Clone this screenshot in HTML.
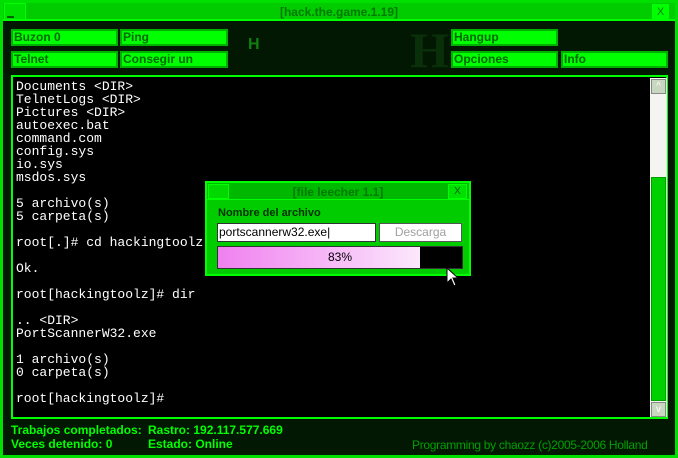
<!DOCTYPE html>
<html><head><style>
*{margin:0;padding:0;box-sizing:border-box}
body{width:678px;height:458px;background:#000;position:relative;overflow:hidden;font-family:"Liberation Sans",sans-serif}
.abs{position:absolute}
.outer{left:0;top:0;width:678px;height:458px;border:3px solid #00e000;background:#021802}
.tb{left:3px;top:3px;width:672px;height:18px;background:#00cc00;border-bottom:2px solid #00ff00}
.btn{background:#00ff00;border:2px solid #00b000;color:#006800;font-weight:bold;font-size:12px;line-height:12px;padding-left:1px}
.term{left:11px;top:75px;width:657px;height:344px;border:2px solid #00ff00;background:#000}
pre{position:absolute;left:3px;top:3px;color:#fff;font-family:"Liberation Mono",monospace;font-size:13px;line-height:13px}
.st{color:#00ff00;font-weight:bold;font-size:12px}
</style></head><body>
<div class="abs outer"></div>
<div class="abs" style="left:248px;top:36px;color:#108010;font:bold 16px 'Liberation Sans'">H</div>
<div class="abs" style="left:410px;top:30px;width:40px;height:40px;color:#0a300a;font:bold 50px 'Liberation Serif';line-height:40px">H</div>
<div class="abs tb"></div>
<div class="abs" style="left:4px;top:3px;width:22px;height:17px;background:#00e000;border:1px solid #00ff00"></div>
<div class="abs" style="left:7px;top:16px;width:7px;height:2px;background:#006000"></div>
<div class="abs" style="left:0;top:5px;width:678px;text-align:center;color:#007800;font-size:12px;font-weight:bold">[hack.the.game.1.19]</div>
<div class="abs" style="left:652px;top:4px;width:17px;height:16px;background:#00ff00;color:#008000;font-size:11px;text-align:center;line-height:16px">X</div>
<div class="abs btn" style="left:11px;top:29px;width:107px;height:17px">Buzon 0</div>
<div class="abs btn" style="left:120px;top:29px;width:108px;height:17px">Ping</div>
<div class="abs btn" style="left:11px;top:51px;width:107px;height:17px">Telnet</div>
<div class="abs btn" style="left:120px;top:51px;width:108px;height:17px">Consegir un</div>
<div class="abs btn" style="left:451px;top:29px;width:107px;height:17px">Hangup</div>
<div class="abs btn" style="left:451px;top:51px;width:107px;height:17px">Opciones</div>
<div class="abs btn" style="left:561px;top:51px;width:107px;height:17px">Info</div>
<div class="abs term"><pre>Documents &lt;DIR&gt;
TelnetLogs &lt;DIR&gt;
Pictures &lt;DIR&gt;
autoexec.bat
command.com
config.sys
io.sys
msdos.sys

5 archivo(s)
5 carpeta(s)

root[.]# cd hackingtoolz

Ok.

root[hackingtoolz]# dir

.. &lt;DIR&gt;
PortScannerW32.exe

1 archivo(s)
0 carpeta(s)

root[hackingtoolz]#</pre>
<div class="abs" style="left:637px;top:1px;width:17px;height:339px;background:#f4f4f0"></div>
<div class="abs" style="left:638px;top:2px;width:15px;height:15px;background:#c8d8c0;border:1px solid #888;color:#fff;font-size:10px;text-align:center;line-height:13px">^</div>
<div class="abs" style="left:638px;top:100px;width:15px;height:224px;background:#00d000;border:1px solid #00a000"></div>
<div class="abs" style="left:638px;top:325px;width:15px;height:15px;background:#c8d8c0;border:1px solid #888;color:#fff;font-size:10px;text-align:center;line-height:13px">v</div>
</div>
<div class="abs" style="left:205px;top:181px;width:266px;height:95px;background:#00cc00;border:2px solid #00ff00"></div>
<div class="abs" style="left:207px;top:183px;width:262px;height:17px;background:#00b800;border-bottom:1px solid #00ff00"></div>
<div class="abs" style="left:208px;top:184px;width:21px;height:15px;background:#00d800;border:1px solid #00ff00"></div>
<div class="abs" style="left:205px;top:185px;width:266px;text-align:center;color:#007a00;font-size:12px;font-weight:bold">[file leecher 1.1]</div>
<div class="abs" style="left:448px;top:184px;width:19px;height:15px;background:#00e000;border:1px solid #00ff00;color:#006000;font-size:10px;text-align:center;line-height:13px">X</div>
<div class="abs" style="left:218px;top:207px;color:#003000;font-size:11px;font-weight:bold">Nombre del archivo</div>
<div class="abs" style="left:217px;top:223px;width:159px;height:19px;background:#fff;border:1px solid #333;font-size:12px;line-height:17px;padding-left:1px;color:#000">portscannerw32.exe|</div>
<div class="abs" style="left:379px;top:223px;width:83px;height:19px;background:#fff;border:1px solid #555;font-size:12px;line-height:17px;text-align:center;color:#a0a0a0">Descarga</div>
<div class="abs" style="left:217px;top:246px;width:246px;height:23px;background:#000;border:1px solid #333"></div>
<div class="abs" style="left:218px;top:247px;width:202px;height:21px;background:linear-gradient(90deg,#f080f0,#fce8fc)"></div>
<div class="abs" style="left:217px;top:250px;width:246px;text-align:center;font-size:12px;color:#000">83%</div>
<svg class="abs" style="left:446px;top:267px" width="14" height="22"><path d="M1 1 L1 16 L5 12 L8 19 L10 18 L7 11 L12 11 Z" fill="#fff" stroke="#000"/></svg>
<div class="abs st" style="left:11px;top:423px">Trabajos completados:</div>
<div class="abs st" style="left:148px;top:423px">Rastro: 192.117.577.669</div>
<div class="abs st" style="left:11px;top:437px">Veces detenido: 0</div>
<div class="abs st" style="left:148px;top:437px">Estado: Online</div>
<div class="abs" style="left:412px;top:438px;color:#00a000;font-size:12px;letter-spacing:-0.3px">Programming by chaozz (c)2005-2006 Holland</div>
</body></html>
